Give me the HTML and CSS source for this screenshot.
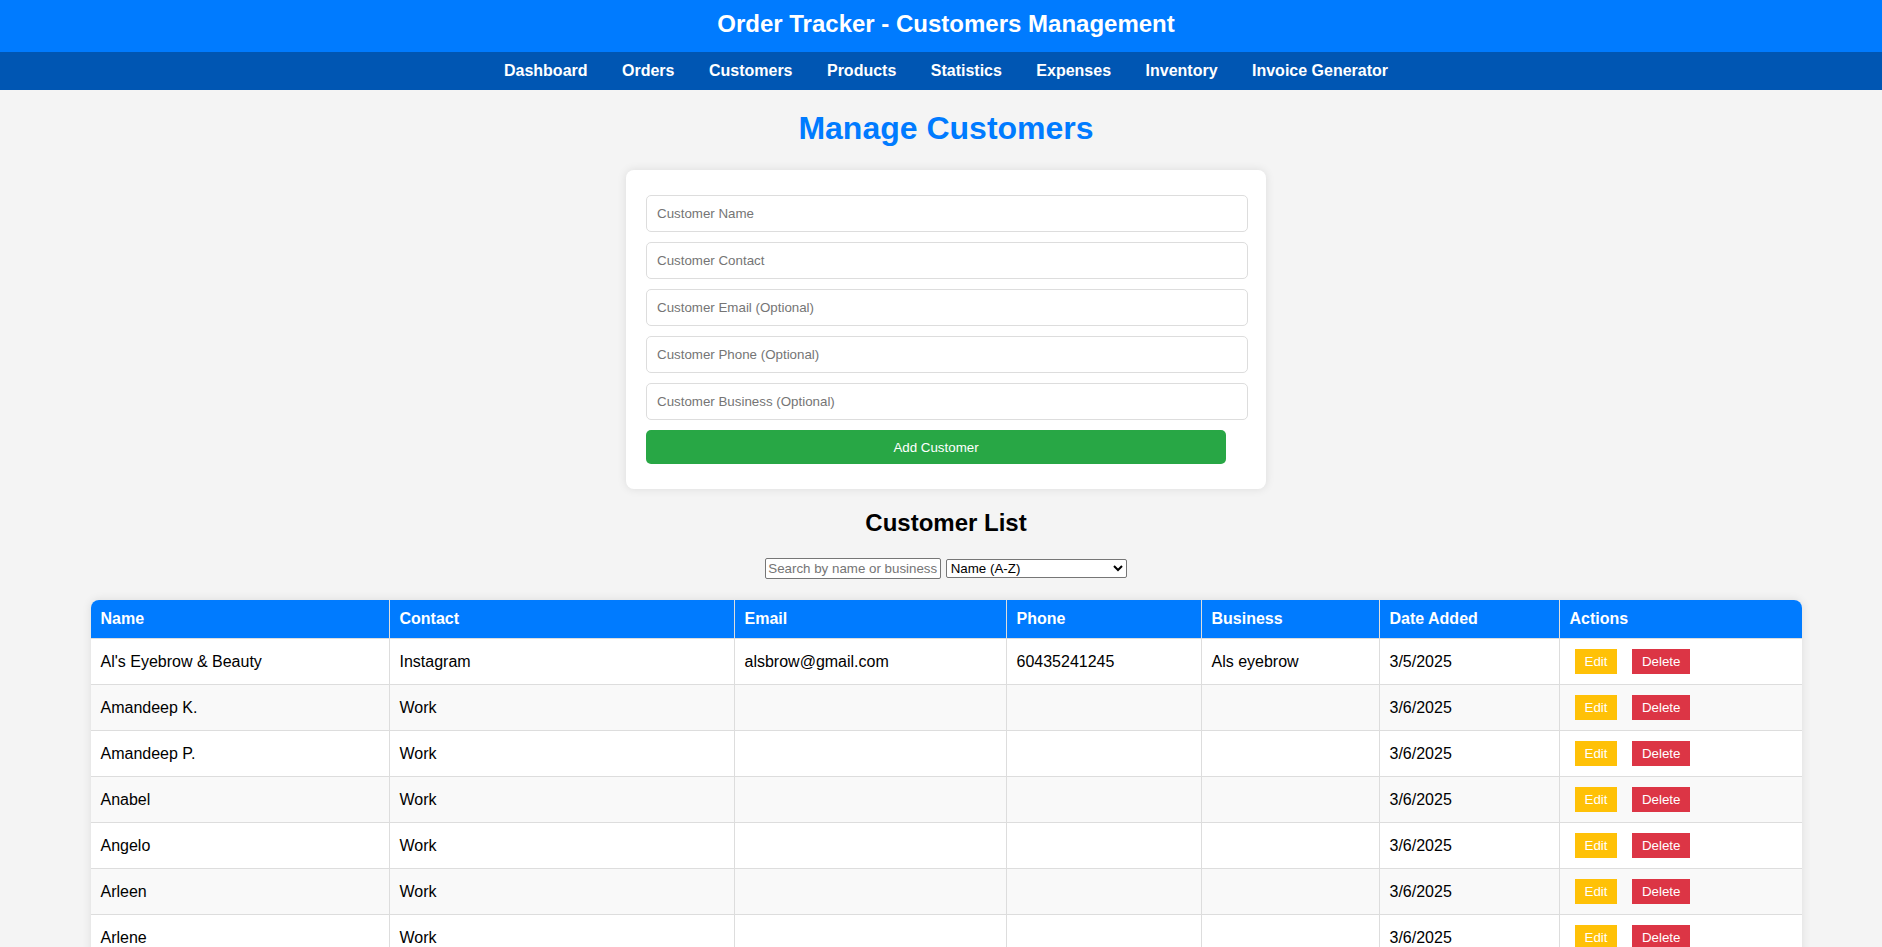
FILE: index.html
```html
<!DOCTYPE html>
<html lang="en">
<head>
<meta charset="utf-8">
<title>Order Tracker - Customers Management</title>
<link rel="stylesheet" href="styles.css">
</head>
<body>
<header class="header">
  <h1 class="header-title">Order Tracker - Customers Management</h1>
</header>
<nav class="nav">
  <a href="#">Dashboard</a>
  <a href="#">Orders</a>
  <a href="#">Customers</a>
  <a href="#">Products</a>
  <a href="#">Statistics</a>
  <a href="#">Expenses</a>
  <a href="#">Inventory</a>
  <a href="#">Invoice Generator</a>
</nav>
<main class="main">
  <h1 class="page-title">Manage Customers</h1>
  <form class="card">
    <input class="field" type="text" placeholder="Customer Name">
    <input class="field" type="text" placeholder="Customer Contact">
    <input class="field" type="text" placeholder="Customer Email (Optional)">
    <input class="field" type="text" placeholder="Customer Phone (Optional)">
    <input class="field" type="text" placeholder="Customer Business (Optional)">
    <button class="add-btn" type="button">Add Customer</button>
  </form>

  <h2 class="list-title">Customer List</h2>
  <div class="filters">
    <input class="search" type="text" placeholder="Search by name or business">
    <select class="sort">
      <option>Name (A-Z)</option>
      <option>Name (Z-A)</option>
      <option>Date Added (Newest)</option>
      <option>Date Added (Oldest)</option>
    </select>
  </div>

  <div class="table-wrap">
    <table class="customers">
      <thead>
        <tr>
          <th class="c-name">Name</th>
          <th class="c-contact">Contact</th>
          <th class="c-email">Email</th>
          <th class="c-phone">Phone</th>
          <th class="c-business">Business</th>
          <th class="c-date">Date Added</th>
          <th class="c-actions">Actions</th>
        </tr>
      </thead>
      <tbody>
        <tr>
          <td>Al's Eyebrow &amp; Beauty</td><td>Instagram</td><td>alsbrow@gmail.com</td><td>60435241245</td><td>Als eyebrow</td><td>3/5/2025</td>
          <td><button class="btn edit" type="button">Edit</button> <button class="btn delete" type="button">Delete</button></td>
        </tr>
        <tr>
          <td>Amandeep K.</td><td>Work</td><td></td><td></td><td></td><td>3/6/2025</td>
          <td><button class="btn edit" type="button">Edit</button> <button class="btn delete" type="button">Delete</button></td>
        </tr>
        <tr>
          <td>Amandeep P.</td><td>Work</td><td></td><td></td><td></td><td>3/6/2025</td>
          <td><button class="btn edit" type="button">Edit</button> <button class="btn delete" type="button">Delete</button></td>
        </tr>
        <tr>
          <td>Anabel</td><td>Work</td><td></td><td></td><td></td><td>3/6/2025</td>
          <td><button class="btn edit" type="button">Edit</button> <button class="btn delete" type="button">Delete</button></td>
        </tr>
        <tr>
          <td>Angelo</td><td>Work</td><td></td><td></td><td></td><td>3/6/2025</td>
          <td><button class="btn edit" type="button">Edit</button> <button class="btn delete" type="button">Delete</button></td>
        </tr>
        <tr>
          <td>Arleen</td><td>Work</td><td></td><td></td><td></td><td>3/6/2025</td>
          <td><button class="btn edit" type="button">Edit</button> <button class="btn delete" type="button">Delete</button></td>
        </tr>
        <tr>
          <td>Arlene</td><td>Work</td><td></td><td></td><td></td><td>3/6/2025</td>
          <td><button class="btn edit" type="button">Edit</button> <button class="btn delete" type="button">Delete</button></td>
        </tr>
      </tbody>
    </table>
  </div>
</main>
</body>
</html>
```
FILE: styles.css
```css
html, body {
  margin: 0;
  padding: 0;
}

body {
  background: #f4f4f4;
  color: #000;
  font-family: "Liberation Sans", Arial, sans-serif;
  font-size: 16px;
}

.header {
  background: #007bff;
  padding: 10px 0 14px 10px;
  text-align: center;
}

.header-title {
  margin: 0;
  color: #fff;
  font-size: 24px;
  font-weight: bold;
}

.nav {
  background: #0056b3;
  padding: 10px 0 10px 10px;
  text-align: center;
}

.nav a {
  color: #fff;
  font-weight: bold;
  text-decoration: none;
  padding: 0 15px;
}

.main {
  padding: 0 0 0 10px;
}

.page-title {
  margin: 20px 0 23px;
  text-align: center;
  color: #007bff;
  font-size: 32px;
}

.card {
  box-sizing: border-box;
  width: 640px;
  margin: 0 auto;
  background: #fff;
  border-radius: 8px;
  box-shadow: 0 0 10px rgba(0, 0, 0, 0.1);
  padding: 25px 20px 25px;
  display: flex;
  flex-direction: column;
  align-items: flex-start;
  gap: 10px;
}

.field {
  box-sizing: border-box;
  width: 602px;
  margin: 0;
  padding: 10px;
  border: 1px solid #ddd;
  border-radius: 5px;
  font-family: "Liberation Sans", Arial, sans-serif;
  font-size: 13.333px;
  line-height: 15px;
  background: #fff;
  color: #000;
}

.field::placeholder {
  color: #757575;
}

.add-btn {
  box-sizing: border-box;
  width: 580px;
  height: 34px;
  padding: 0 10px;
  border: none;
  border-radius: 5px;
  background: #28a745;
  color: #fff;
  font-family: "Liberation Sans", Arial, sans-serif;
  font-size: 13.333px;
}

.list-title {
  margin: 20px 0 21px;
  text-align: center;
  font-size: 24px;
}

.filters {
  text-align: center;
  margin-bottom: 20px;
  height: 22px;
}

.search {
  box-sizing: border-box;
  width: 176px;
  height: 21px;
  padding: 1px 2px;
  border: 1px solid #767676;
  border-radius: 2px;
  font-family: "Liberation Sans", Arial, sans-serif;
  font-size: 13.333px;
  vertical-align: top;
  background: #fff;
}

.search::placeholder {
  color: #757575;
}

.sort {
  box-sizing: border-box;
  width: 181px;
  height: 19px;
  margin-top: 1px;
  border: 1px solid #767676;
  border-radius: 2px;
  font-family: "Liberation Sans", Arial, sans-serif;
  font-size: 13.333px;
  vertical-align: top;
  background: #fff;
  color: #000;
}

.table-wrap {
  width: 1711px;
  margin: 0 auto;
  background: #fff;
  border-radius: 8px;
  overflow: hidden;
  box-shadow: 0 0 10px rgba(0, 0, 0, 0.1);
}

.customers {
  width: 100%;
  border-collapse: collapse;
  table-layout: fixed;
}

.customers th,
.customers td {
  border: 1px solid #ddd;
  padding: 10px;
  text-align: left;
}

.customers tr > :first-child {
  border-left: none;
}

.customers tr > :last-child {
  border-right: none;
}

.customers thead th {
  border-top: none;
  background: #007bff;
  color: #fff;
  font-weight: bold;
}

.customers tbody tr:nth-child(even) {
  background: #f9f9f9;
}

.c-name { width: 278px; }
.c-contact { width: 324px; }
.c-email { width: 251px; }
.c-phone { width: 174px; }
.c-business { width: 157px; }
.c-date { width: 159px; }
.c-actions { width: auto; }

.btn {
  margin: 0 5px;
  padding: 5px 10px;
  border: none;
  border-radius: 0;
  color: #fff;
  font-family: "Liberation Sans", Arial, sans-serif;
  font-size: 13.333px;
  line-height: 15px;
}

.edit {
  background: #ffc107;
}

.delete {
  background: #dc3545;
}
```
